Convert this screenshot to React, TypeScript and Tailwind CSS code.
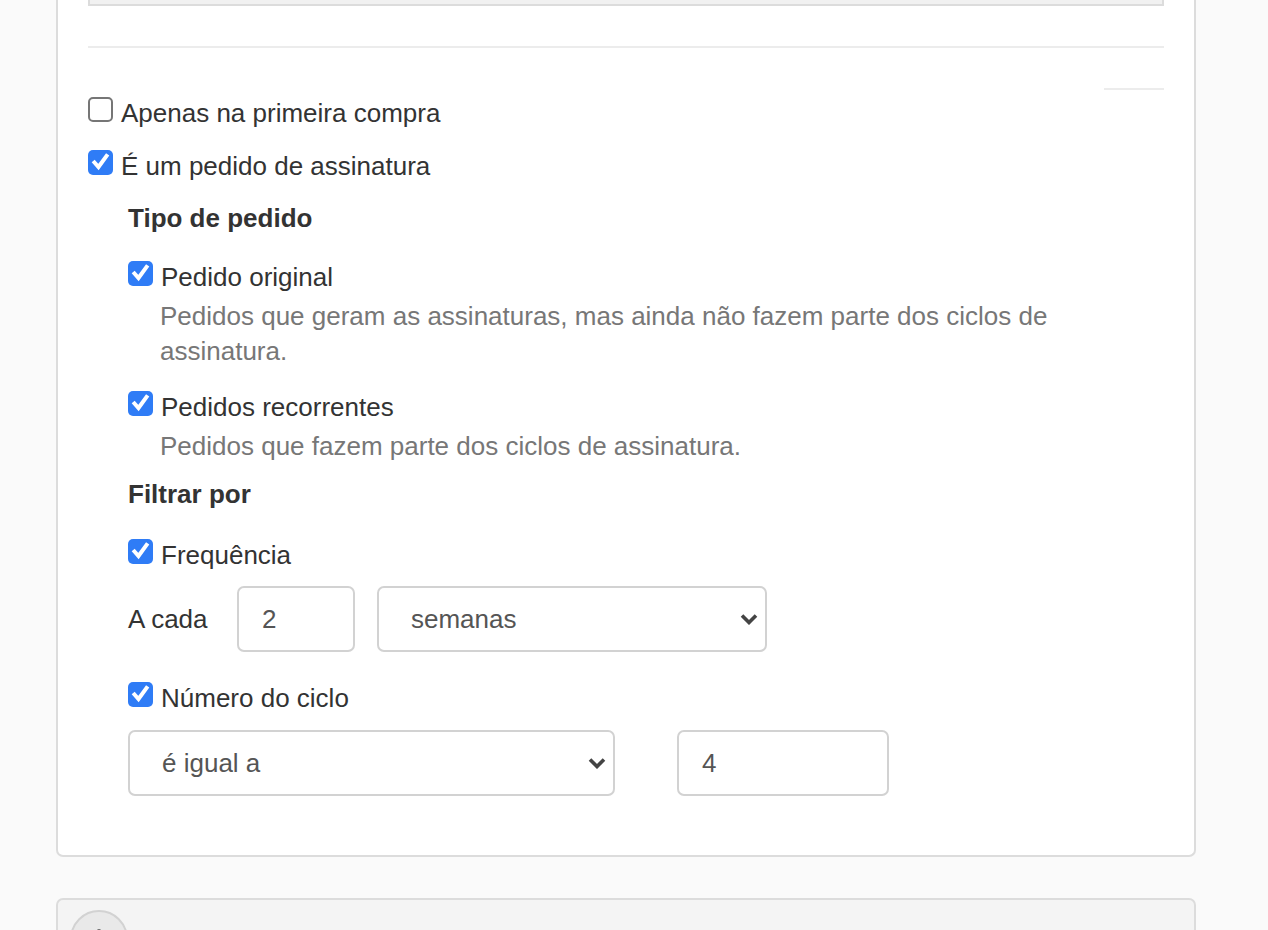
import React from "react";

const font = { fontFamily: '"Liberation Sans", Arial, Helvetica, sans-serif' };

function Box({ checked }: { checked: boolean }) {
  if (!checked) {
    return (
      <span className="mt-px block h-[25px] w-[25px] shrink-0 rounded-[5px] border-2 border-[#767676] bg-white" />
    );
  }
  return (
    <span className="mt-px flex h-[25px] w-[25px] shrink-0 items-center justify-center rounded-[5px] bg-[#2f7cf6]">
      <svg width="25" height="25" viewBox="0 0 25 25">
        <path d="M6.5 12.5 L10.5 17 L18.5 6" fill="none" stroke="#fff" strokeWidth="4" strokeLinecap="square" strokeLinejoin="miter" />
      </svg>
    </span>
  );
}

function Check({ checked, label, className = "" }: { checked: boolean; label: string; className?: string }) {
  return (
    <label className={`flex items-start gap-[8px] text-[26px] leading-[35px] text-[#333] ${className}`}>
      <Box checked={checked} />
      <span>{label}</span>
    </label>
  );
}

function Chevron() {
  return (
    <svg width="18" height="12" viewBox="0 0 18 12" className="shrink-0">
      <path d="M2 2.5 L9 9.5 L16 2.5" fill="none" stroke="#444" strokeWidth="3.6" />
    </svg>
  );
}

function FakeSelect({ value, className }: { value: string; className: string }) {
  return (
    <div className={`flex h-[66px] items-center justify-between rounded-[7px] border-2 border-[#d2d2d2] bg-white pl-[32px] pr-[7px] text-[26px] text-[#555] ${className}`}>
      <span>{value}</span>
      <Chevron />
    </div>
  );
}

function FakeInput({ value, className }: { value: string; className: string }) {
  return (
    <div className={`flex h-[66px] items-center rounded-[7px] border-2 border-[#d2d2d2] bg-white pl-[23px] text-[26px] text-[#555] ${className}`}>
      {value}
    </div>
  );
}

export default function App() {
  return (
    <div className="h-[930px] overflow-hidden bg-[#fafafa] pl-[56px] pr-[72px]" style={font}>
      <div className="w-[1140px] rounded-b-[7px] border-2 border-t-0 border-[#dcdcdc] bg-white px-[30px] pb-[59px]">
        <div className="h-[6px] border-2 border-t-0 border-[#dcdcdc] bg-[#f1f1f1]" />
        <div className="mt-[40px] h-[2px] bg-[#ececec]" />
        <div className="mt-[40px] ml-auto h-[2px] w-[60px] bg-[#ececec]" />

        <Check checked={false} label="Apenas na primeira compra" className="mt-[6px]" />
        <Check checked label="É um pedido de assinatura" className="mt-[18px]" />

        <div className="pl-[40px]">
          <div className="mt-[17px] text-[26px] font-bold leading-[34px] text-[#333]">Tipo de pedido</div>

          <Check checked label="Pedido original" className="mt-[25px]" />
          <p className="mt-[4px] pl-[32px] text-[26px] leading-[35px] text-[#777]">
            Pedidos que geram as assinaturas, mas ainda não fazem parte dos ciclos de assinatura.
          </p>

          <Check checked label="Pedidos recorrentes" className="mt-[21px]" />
          <p className="mt-[4px] pl-[32px] text-[26px] leading-[35px] text-[#777]">
            Pedidos que fazem parte dos ciclos de assinatura.
          </p>

          <div className="mt-[13px] text-[26px] font-bold leading-[34px] text-[#333]">Filtrar por</div>

          <Check checked label="Frequência" className="mt-[27px]" />
          <div className="mt-[13px] flex items-center">
            <span className="w-[109px] text-[26px] text-[#333]">A cada</span>
            <FakeInput value="2" className="w-[118px]" />
            <FakeSelect value="semanas" className="ml-[22px] w-[390px]" />
          </div>

          <Check checked label="Número do ciclo" className="mt-[29px]" />
          <div className="mt-[14px] flex items-center">
            <FakeSelect value="é igual a" className="w-[487px]" />
            <FakeInput value="4" className="ml-[62px] w-[212px]" />
          </div>
        </div>
      </div>

      <div className="mt-[41px] h-[100px] w-[1140px] rounded-[7px] border-2 border-[#dcdcdc] bg-[#f4f4f4] pl-[12px] pt-[10px]">
        <div className="flex h-[58px] w-[58px] items-center justify-center rounded-full border-2 border-[#d2d2d2] bg-[#e9e9e9]">
          <svg width="24" height="24" viewBox="0 0 24 24">
            <path d="M12 2 V22 M2 12 H22" stroke="#777" strokeWidth="3" />
          </svg>
        </div>
      </div>
    </div>
  );
}
